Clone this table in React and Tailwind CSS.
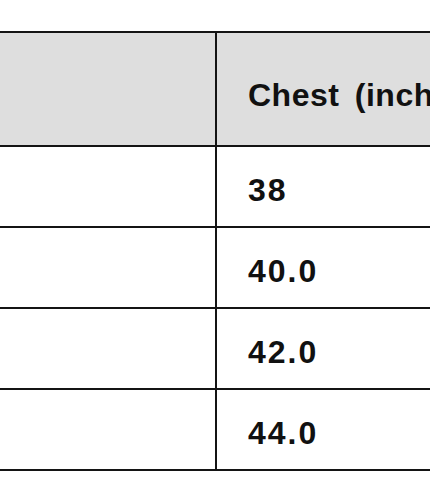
import React from "react";

const rows = ["38", "40.0", "42.0", "44.0"];

const App = () => {
  return (
    <div
      className="w-[430px] h-[502px] overflow-hidden bg-white pt-[31px]"
      style={{ fontFamily: '"Liberation Sans", Arial, sans-serif' }}
    >
      <div className="w-[700px] border-t-2 border-[#141414]">
        {/* Header */}
        <div className="flex h-[114px] bg-[#dedede] border-b-2 border-[#141414]">
          <div className="w-[217px] shrink-0 border-r-2 border-[#141414]" />
          <div className="flex items-center pl-[31px] pt-[11px] text-[32px] font-bold tracking-[0.5px] [word-spacing:6px] text-[#111] whitespace-nowrap">
            Chest (inches)
          </div>
        </div>

        {/* Body rows */}
        {rows.map((v) => (
          <div key={v} className="flex h-[81px] border-b-2 border-[#141414]">
            <div className="w-[217px] shrink-0 border-r-2 border-[#141414]" />
            <div className="flex items-center pl-[31px] pt-[6px] text-[32px] font-bold tracking-[2px] text-[#111]">
              {v}
            </div>
          </div>
        ))}
      </div>
    </div>
  );
};

export default App;
